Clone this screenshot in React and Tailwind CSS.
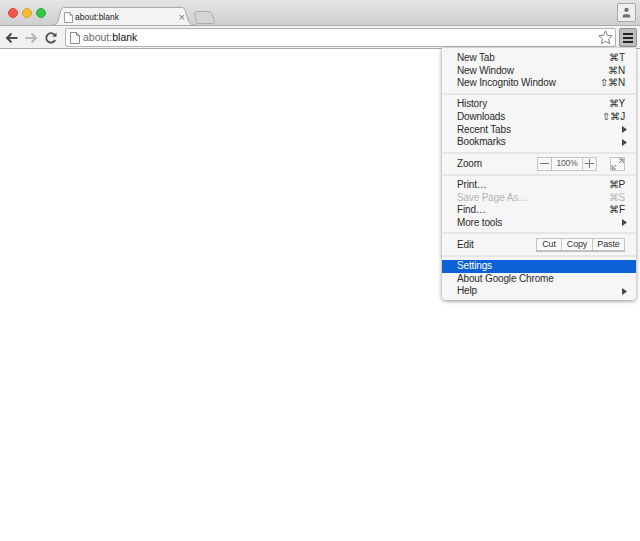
import { User } from "lucide-react";

const font = "font-['Liberation_Sans',Arial,sans-serif]";

function PageIcon({ className }) {
  return (
    <svg viewBox="0 0 10 12" className={className} fill="#fff" stroke="#8a8a8a" strokeWidth="1">
      <path d="M.5.5h6l3 3v8h-9z" />
      <path d="M6.5.5v3h3" fill="none" />
    </svg>
  );
}

function MenuRow({ label, shortcut, arrow, disabled, active }) {
  let color = "text-[#2a2a2a]";
  if (disabled) color = "text-[#b4b4b4]";
  if (active) color = "bg-[#0b62d6] text-white";
  return (
    <div className={`flex h-[12.55px] items-center justify-between pl-[15px] pr-[11px] text-[10px] leading-none tracking-[-0.15px] ${color}`}>
      <span>{label}</span>
      {shortcut && <span>{shortcut}</span>}
      {arrow && (
        <svg viewBox="0 0 5 7" className="-mr-[2px] h-[7px] w-[5px]" fill="#444">
          <path d="M0 0l5 3.500L0 7z" />
        </svg>
      )}
    </div>
  );
}

function Divider() {
  return <div className="my-[3.25px] h-[2px] bg-[#e6e6e6]" />;
}

function EditButton({ label, className }) {
  return (
    <div className={`flex h-full items-center justify-center text-[9px] text-[#333] ${className}`}>
      {label}
    </div>
  );
}

function ChromeMenu() {
  return (
    <div className={`absolute right-[4px] top-[48px] w-[194px] rounded-b-[4px] bg-[#f6f6f6] pt-[4px] pb-[2px] shadow-[0_1px_4px_rgba(0,0,0,0.45)] ${font}`}>
      <MenuRow label="New Tab" shortcut="⌘T" />
      <MenuRow label="New Window" shortcut="⌘N" />
      <MenuRow label="New Incognito Window" shortcut="⇧⌘N" />
      <Divider />
      <MenuRow label="History" shortcut="⌘Y" />
      <MenuRow label="Downloads" shortcut="⇧⌘J" />
      <MenuRow label="Recent Tabs" arrow />
      <MenuRow label="Bookmarks" arrow />
      <Divider />

      {/* Zoom */}
      <div className="flex h-[13.5px] items-center pl-[15px] pr-[11px] text-[10px] tracking-[-0.15px] text-[#2a2a2a]">
        <span>Zoom</span>
        <div className="ml-auto flex h-[14px] w-[60px] items-center border border-[#c4c4c4] bg-[#f8f8f8] text-[8.5px] text-[#555]">
          <span className="flex h-full w-[14px] items-center justify-center border-r border-[#c4c4c4]">
            <span className="h-px w-[9px] bg-[#777]" />
          </span>
          <span className="flex-1 text-center">100%</span>
          <span className="relative flex h-full w-[14px] items-center justify-center border-l border-[#c4c4c4]">
            <span className="h-px w-[9px] bg-[#777]" />
            <span className="absolute h-[9px] w-px bg-[#777]" />
          </span>
        </div>
        <div className="ml-[13px] flex h-[14px] w-[15px] items-center justify-center border border-[#c4c4c4] bg-[#f8f8f8]">
          <svg viewBox="0 0 13 12" className="h-[12px] w-[13px]" fill="none" stroke="#777" strokeWidth="1">
            <path d="M8 1h4v4M12 1 8 5M5 11H1V7M1 11l4-4" />
          </svg>
        </div>
      </div>
      <Divider />

      <MenuRow label="Print…" shortcut="⌘P" />
      <MenuRow label="Save Page As…" shortcut="⌘S" disabled />
      <MenuRow label="Find…" shortcut="⌘F" />
      <MenuRow label="More tools" arrow />
      <Divider />

      {/* Edit */}
      <div className="flex h-[14px] items-center pl-[15px] pr-[11px] text-[10px] tracking-[-0.15px] text-[#2a2a2a]">
        <span>Edit</span>
        <div className="ml-auto flex h-[13px] w-[89px] border border-[#c4c4c4] bg-[#fafafa] shadow-[0_1px_0_#bbb]">
          <EditButton label="Cut" className="w-[25px] border-r border-[#c4c4c4]" />
          <EditButton label="Copy" className="w-[31px] border-r border-[#c4c4c4]" />
          <EditButton label="Paste" className="flex-1" />
        </div>
      </div>
      <Divider />

      <MenuRow label="Settings" active />
      <MenuRow label="About Google Chrome" />
      <MenuRow label="Help" arrow />
    </div>
  );
}

export default function App() {
  return (
    <div className={`relative h-[541px] w-[640px] overflow-hidden bg-white ${font}`}>
      {/* Tab strip */}
      <div className="flex h-[25px] items-end bg-gradient-to-b from-[#e4e4e4] to-[#cfcfcf]">
        <div className="flex h-[18px] w-[53px] items-center gap-[4px] self-center pl-[8px]">
          <span className="size-[10px] rounded-full border border-[#d9453e] bg-[#f5574f]" />
          <span className="size-[10px] rounded-full border border-[#d9a127] bg-[#f6bb36]" />
          <span className="size-[10px] rounded-full border border-[#2aa63a] bg-[#36c748]" />
        </div>
        <div className="relative h-[18px] w-[142px]">
          <svg viewBox="0 0 142 18" className="absolute inset-0 h-full w-full" fill="#f3f3f3" stroke="#a9a9a9">
            <path d="M0 18C5 18 5 14 6 10L8 3C9 1 10 .5 12 .5H128C130 .5 131 1 132 3L135 13C136 16 138 18 142 18" />
          </svg>
          <div className="relative flex h-full items-center pl-[11px] pr-[10px] pt-[2px] text-[8.5px] text-[#222]">
            <PageIcon className="mr-[2px] h-[11px] w-[9px]" />
            <span>about:blank</span>
            <span className="ml-auto text-[11px] leading-none text-[#777]">×</span>
          </div>
        </div>
        <svg viewBox="0 0 24 13" className="mb-[1px] -ml-[2px] h-[13px] w-[24px]" fill="#d4d4d4" stroke="#adadad">
          <path d="M4 12.5 1.5 3C1.2 1.5 2 .5 3.5.5h13c1 0 1.7.6 2 1.5l3 8.5c.4 1.2-.3 2-1.500 2z" />
        </svg>
        <div className="ml-auto mr-[4px] flex h-[19px] w-[19px] items-center justify-center self-center rounded-[2px] border border-[#a8a8a8] bg-[#eeeeee]">
          <User size={13} strokeWidth={0} fill="#6f6f6f" />
        </div>
      </div>

      {/* Toolbar */}
      <div className="flex h-[24px] items-center border-b border-[#a8a8a8] bg-[#f1f1f1] pt-[3px] pb-px shadow-[inset_0_1px_0_#a9a9a9]">
        <div className="flex w-[65px] items-center pl-[5px]">
          <svg viewBox="0 0 13 12" className="h-[12px] w-[13px]" fill="none" stroke="#4c4c4c" strokeWidth="2">
            <path d="M12.500 6H2M6.500 1.500 2 6l4.500 4.500" />
          </svg>
          <svg viewBox="0 0 13 12" className="ml-[7px] h-[12px] w-[13px]" fill="none" stroke="#b5b5b5" strokeWidth="2">
            <path d="M.5 6H11M6.500 1.500 11 6l-4.500 4.500" />
          </svg>
          <svg viewBox="0 0 12 12" className="ml-[7px] h-[12px] w-[12px]" fill="none" stroke="#4c4c4c" strokeWidth="1.800">
            <path d="M10.200 8A4.700 4.700 0 1 1 9.500 2.800" />
            <path d="M11.500.5v4.300H7.200z" fill="#4c4c4c" stroke="none" />
          </svg>
        </div>
        <div className="flex h-[19px] w-[551px] items-center rounded-[2px] border border-[#b4b4b4] bg-white pl-[4px] pr-[2px]">
          <PageIcon className="h-[12px] w-[10px]" />
          <span className="ml-[3px] text-[10.500px] text-[#6c6c6c]">about:<span className="text-[#111]">blank</span></span>
          <svg viewBox="0 0 16 16" className="ml-auto h-[15px] w-[15px]" fill="#fff" stroke="#777" strokeWidth="1">
            <path d="m8 1 2.100 4.700 5 .5-3.800 3.400 1.100 5L8 12l-4.400 2.600 1.100-5L.9 6.200l5-.5z" />
          </svg>
        </div>
        <div className="ml-[3px] flex h-[19px] w-[18px] flex-col items-center justify-center gap-[2px] rounded-[2px] border border-[#8f8f8f] bg-[#bdbdbd]">
          <span className="h-[2px] w-[10px] bg-[#222]" />
          <span className="h-[2px] w-[10px] bg-[#222]" />
          <span className="h-[2px] w-[10px] bg-[#222]" />
        </div>
      </div>

      <ChromeMenu />
    </div>
  );
}
